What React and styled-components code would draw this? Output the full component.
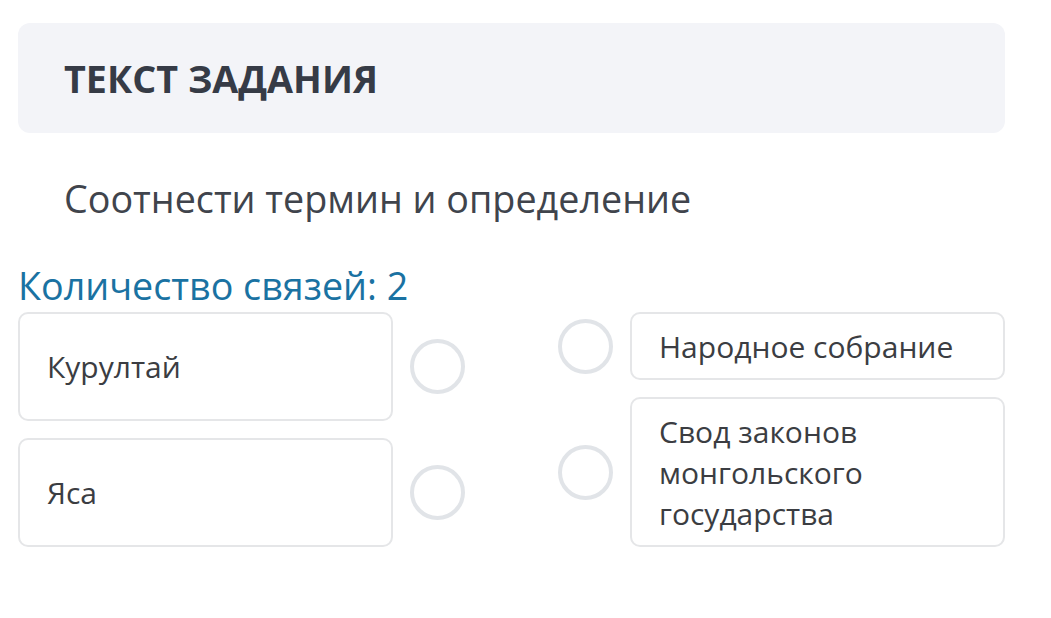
import React from "react";
import styled, { createGlobalStyle } from "styled-components";

const Global = createGlobalStyle`
  html, body { margin: 0; padding: 0; background: #ffffff; }
  body { font-family: "Open Sans", "Noto Sans", sans-serif; }
`;

const Page = styled.div`
  width: 1051px;
  padding: 23px 46px 0 18px;
  box-sizing: border-box;
`;

const Header = styled.div`
  background: #f3f4f8;
  border-radius: 12px;
  height: 110px;
  display: flex;
  align-items: center;
  padding-left: 46px;
  box-sizing: border-box;
`;

const Title = styled.h1`
  margin: 0;
  font-size: 37.7px;
  font-weight: 700;
  color: #363b46;
  letter-spacing: 0;
`;

const Prompt = styled.p`
  margin: 42px 0 0 46px;
  font-size: 37.7px;
  line-height: 48px;
  color: #40444c;
`;

const Count = styled.div`
  margin-top: 43px;
  font-size: 37.7px;
  line-height: 40px;
  color: #1a72a2;
`;

const Board = styled.div`
  margin-top: 6px;
  display: grid;
  grid-template-columns: 1fr 1fr;
  column-gap: 93px;
`;

const Column = styled.div`
  display: flex;
  flex-direction: column;
  gap: 17px;
`;

const Row = styled.div`
  display: flex;
  align-items: center;
  gap: 17px;
`;

const Card = styled.div`
  flex: 1;
  border: 2px solid #e5e6e8;
  border-radius: 10px;
  box-sizing: border-box;
  min-height: ${(p) => (p.$tall ? "109px" : "auto")};
  display: flex;
  align-items: center;
  padding: 11.5px 27px;
  font-size: 30px;
  line-height: 41px;
  color: #3b3d42;
`;

const Dot = styled.div`
  width: 55px;
  height: 55px;
  flex: none;
  border-radius: 50%;
  border: 4px solid #e1e4e8;
  box-sizing: border-box;
`;

const left = ["Курултай", "Яса"];
const right = ["Народное собрание", "Свод законов монгольского государства"];

export default function App() {
  return (
    <Page>
      <Global />
      <Header>
        <Title>ТЕКСТ ЗАДАНИЯ</Title>
      </Header>
      <Prompt>Соотнести термин и определение</Prompt>
      <Count>Количество связей: 2</Count>
      <Board>
        <Column>
          {left.map((t) => (
            <Row key={t}>
              <Card $tall>{t}</Card>
              <Dot />
            </Row>
          ))}
        </Column>
        <Column>
          {right.map((t) => (
            <Row key={t}>
              <Dot />
              <Card>{t}</Card>
            </Row>
          ))}
        </Column>
      </Board>
    </Page>
  );
}
